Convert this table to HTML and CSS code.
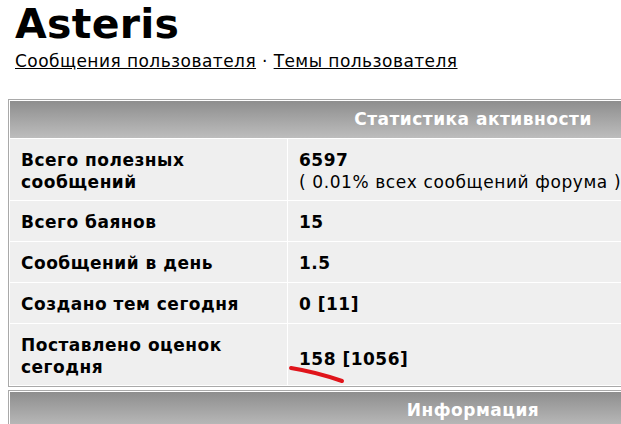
FILE: index.html
```html
<!DOCTYPE html>
<html lang="ru">
<head>
<meta charset="utf-8">
<title>Asteris</title>
<link rel="stylesheet" href="styles.css">
</head>
<body>
<div class="page">
  <div class="profile-head">
    <div class="username">Asteris</div>
    <div class="userlinks"><a href="#">Сообщения пользователя</a> · <a href="#">Темы пользователя</a></div>
  </div>

  <div class="stats-wrap">
    <table class="forumline">
      <colgroup><col class="c1"><col class="c2"></colgroup>
      <tr><th colspan="2" class="cat">Статистика активности</th></tr>
      <tr>
        <td class="lbl">Всего полезных<br>сообщений</td>
        <td class="val"><b>6597</b><br><span class="note">( 0.01% всех сообщений форума )</span></td>
      </tr>
      <tr><td class="lbl">Всего баянов</td><td class="val"><b>15</b></td></tr>
      <tr><td class="lbl">Сообщений в день</td><td class="val"><b>1.5</b></td></tr>
      <tr><td class="lbl">Создано тем сегодня</td><td class="val"><b>0 [11]</b></td></tr>
      <tr><td class="lbl">Поставлено оценок<br>сегодня</td><td class="val mid"><b>158 [1056]</b></td></tr>
    </table>
    <svg class="mark" width="80" height="40" viewBox="0 0 80 40"><path d="M11 9 Q 36 13 62 22" fill="none" stroke="#e0141b" stroke-width="4" stroke-linecap="round"/></svg>
  </div>

  <table class="forumline second">
    <colgroup><col class="c1"><col class="c2"></colgroup>
    <tr><th colspan="2" class="cat">Информация</th></tr>
    <tr><td class="lbl">&nbsp;</td><td class="val">&nbsp;</td></tr>
  </table>
</div>
</body>
</html>
```
FILE: styles.css
```css
html, body {
  margin: 0;
  padding: 0;
  overflow: hidden;
  background: #ffffff;
}
body {
  font-family: Verdana, "DejaVu Sans", sans-serif;
  color: #000;
  width: 621px;
  height: 424px;
}
.page {
  padding-left: 8px;
  width: 940px;
}
.profile-head {
  padding-left: 7px;
}
.username {
  font-size: 41px;
  font-weight: bold;
  line-height: 48px;
  letter-spacing: 0.3px;
  color: #000;
}
.userlinks {
  font-size: 17px;
  line-height: 20px;
  letter-spacing: 0.45px;
  margin-top: 3px;
}
.userlinks a {
  color: #000;
  text-decoration: underline;
}
.stats-wrap {
  position: relative;
  margin-top: 28px;
}
.forumline {
  width: 930px;
  table-layout: fixed;
  border: 1px solid #a9a9a9;
  border-collapse: separate;
  border-spacing: 1px;
  background: #fff;
}
.c1 {
  width: 277px;
}
.forumline td, .forumline th {
  border: 0;
}
.cat {
  padding: 7px 10px 8px;
  background: linear-gradient(#8e8e8e, #bdbdbd);
  color: #fff;
  font-size: 17px;
  font-weight: bold;
  letter-spacing: 0.5px;
  text-align: center;
  line-height: 22px;
}
.lbl, .val {
  background: #efefef;
  font-size: 17px;
  line-height: 22px;
  height: 23px;
  padding: 10px 10px 7px 11px;
  vertical-align: top;
}
.lbl {
  font-weight: bold;
  letter-spacing: 0.5px;
}
.val b {
  letter-spacing: 0.5px;
}
.note {
  letter-spacing: 0.6px;
  white-space: nowrap;
}
.val.mid {
  vertical-align: middle;
  padding-top: 13px;
  padding-bottom: 4px;
}
.mark {
  position: absolute;
  left: 272px;
  top: 260px;
}
.second {
  margin-top: 3px;
}
```
